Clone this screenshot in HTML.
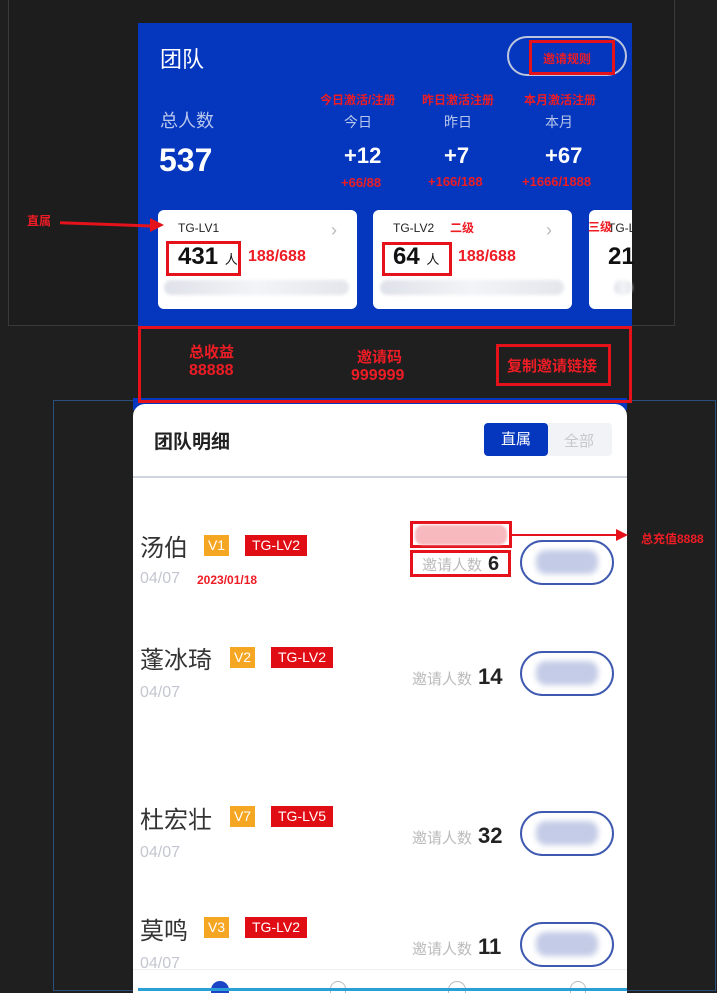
<!DOCTYPE html>
<html><head><meta charset="utf-8"><style>
*{margin:0;padding:0;box-sizing:border-box}
body{width:717px;height:993px;background:#1f1f1f;position:relative;overflow:hidden;font-family:"Liberation Sans","Noto Sans CJK SC",sans-serif}
.a{position:absolute;white-space:nowrap}
.r{color:#ee1c25;font-weight:bold}
.w{color:#fff}
.box{position:absolute;border:3px solid #e5121b}
.card{position:absolute;background:#fff;border-radius:6px}
.blur{position:absolute;background:linear-gradient(90deg,#dfe2ea,#f3f4f7,#e4e6ec);border-radius:10px;filter:blur(1.5px)}
.pill{position:absolute;left:520px;width:94px;height:45px;border:2.5px solid #3e59b0;border-radius:23px}
.pill i{position:absolute;left:14px;top:8px;width:62px;height:24px;background:#c3cbe6;border-radius:10px;filter:blur(3px)}
.nm{font-size:24px;color:#333;position:absolute;left:140px}
.v{position:absolute;background:#f5a623;color:#fff;font-size:14px;width:25px;text-align:center;height:21px;line-height:21px}
.tg{position:absolute;background:#e10d14;color:#fff;font-size:14px;width:62px;text-align:center;height:21px;line-height:21px}
.dt{position:absolute;left:140px;font-size:16px;color:#c4c6d0}
.inv{position:absolute;font-size:15px;color:#bbb}
.inv b{font-size:22px;color:#222;font-weight:bold;margin-left:6px}
</style></head><body>
<div class="a" style="left:8px;top:0;width:667px;height:326px;background:#1d1d1d;border:1px solid #3a3a3a;border-top:0"></div>
<div class="a" style="left:138px;top:23px;width:494px;height:303px;background:#0437bd"></div>
<div class="a w" style="left:160px;top:42px;font-size:22px">团队</div>
<div class="a" style="left:507px;top:36px;width:120px;height:40px;border:2px solid #bcc5de;border-radius:20px"></div>
<div class="box" style="left:529px;top:40px;width:86px;height:35px"></div>
<div class="a r" style="left:543px;top:50px;font-size:12px">邀请规则</div>
<div class="a r" style="left:320px;top:91px;font-size:12px">今日激活/注册</div>
<div class="a r" style="left:422px;top:91px;font-size:12px">昨日激活注册</div>
<div class="a r" style="left:524px;top:91px;font-size:12px">本月激活注册</div>
<div class="a" style="left:160px;top:107px;font-size:18px;color:#b8c6ec">总人数</div>
<div class="a" style="left:344px;top:112px;font-size:14px;color:#b8c6ec">今日</div>
<div class="a" style="left:444px;top:112px;font-size:14px;color:#b8c6ec">昨日</div>
<div class="a" style="left:545px;top:112px;font-size:14px;color:#b8c6ec">本月</div>
<div class="a w" style="left:159px;top:142px;font-size:32px;font-weight:bold">537</div>
<div class="a w" style="left:344px;top:143px;font-size:22px;font-weight:bold">+12</div>
<div class="a w" style="left:444px;top:143px;font-size:22px;font-weight:bold">+7</div>
<div class="a w" style="left:545px;top:143px;font-size:22px;font-weight:bold">+67</div>
<div class="a r" style="left:341px;top:175px;font-size:13px">+66/88</div>
<div class="a r" style="left:428px;top:174px;font-size:13px">+166/188</div>
<div class="a r" style="left:522px;top:174px;font-size:13px">+1666/1888</div>
<div class="card" style="left:158px;top:210px;width:199px;height:99px"></div>
<div class="card" style="left:373px;top:210px;width:199px;height:99px"></div>
<div class="card" style="left:589px;top:210px;width:43px;height:99px;border-radius:6px 0 0 6px"></div>
<div class="a" style="left:178px;top:221px;font-size:12px;color:#222">TG-LV1</div>
<div class="a" style="left:393px;top:221px;font-size:12px;color:#222">TG-LV2</div>
<div class="a" style="left:608px;top:221px;font-size:12px;color:#222">TG-L</div>
<div class="a" style="left:331px;top:220px;font-size:18px;color:#bbb">›</div>
<div class="a" style="left:546px;top:220px;font-size:18px;color:#bbb">›</div>
<div class="box" style="left:166px;top:241px;width:75px;height:35px"></div>
<div class="box" style="left:382px;top:242px;width:70px;height:34px"></div>
<div class="a" style="left:178px;top:243px;font-size:24px;color:#111;font-weight:bold">431 <span style="font-size:13px;font-weight:normal">人</span></div>
<div class="a" style="left:393px;top:243px;font-size:24px;color:#111;font-weight:bold">64 <span style="font-size:13px;font-weight:normal">人</span></div>
<div class="a" style="left:608px;top:243px;font-size:24px;color:#111;font-weight:bold">21</div>
<div class="a r" style="left:248px;top:248px;font-size:16px">188/688</div>
<div class="a r" style="left:458px;top:248px;font-size:16px">188/688</div>
<div class="blur" style="left:164px;top:280px;width:185px;height:15px"></div>
<div class="blur" style="left:380px;top:280px;width:184px;height:15px"></div>
<div class="blur" style="left:614px;top:280px;width:18px;height:15px"></div>
<div class="a r" style="left:588px;top:218px;font-size:12px">三级</div>
<div class="a r" style="left:450px;top:219px;font-size:12px">二级</div>
<div class="a r" style="left:27px;top:212px;font-size:12px">直属</div>
<div class="a" style="left:60px;top:223px;width:98px;height:3px;background:#e5121b;transform:rotate(2deg)"></div>
<div class="a" style="left:150px;top:218px;border-left:14px solid #e5121b;border-top:7px solid transparent;border-bottom:7px solid transparent"></div>
<div class="a" style="left:53px;top:400px;width:663px;height:591px;border:1px solid #2a4f7a"></div>
<div class="a" style="left:133px;top:398px;width:494px;height:12px;background:#0437bd"></div>
<div class="box" style="left:138px;top:326px;width:494px;height:77px"></div>
<div class="a r" style="left:189px;top:341px;font-size:15px">总收益</div>
<div class="a r" style="left:189px;top:362px;font-size:16px">88888</div>
<div class="a r" style="left:357px;top:346px;font-size:15px">邀请码</div>
<div class="a r" style="left:351px;top:367px;font-size:16px">999999</div>
<div class="box" style="left:496px;top:344px;width:115px;height:42px"></div>
<div class="a r" style="left:507px;top:355px;font-size:15px">复制邀请链接</div>
<div class="a" style="left:133px;top:404px;width:494px;height:589px;background:#fff;border-radius:12px 12px 0 0"></div>
<div class="a" style="left:154px;top:427px;font-size:19px;color:#222;font-weight:bold">团队明细</div>
<div class="a" style="left:484px;top:423px;width:128px;height:33px;background:#f2f3f6;border-radius:4px"></div>
<div class="a" style="left:484px;top:423px;width:64px;height:33px;background:#0437bd;border-radius:4px;color:#fff;font-size:15px;text-align:center;line-height:33px">直属</div>
<div class="a" style="left:564px;top:430px;font-size:15px;color:#c8c8c8">全部</div>
<div class="a" style="left:133px;top:476px;width:494px;height:2px;background:#cfd6de"></div>
<div class="nm" style="top:528px">汤伯</div>
<div class="v" style="left:204px;top:535px">V1</div>
<div class="tg" style="left:245px;top:535px">TG-LV2</div>
<div class="dt" style="top:570px">04/07</div>
<div class="a r" style="left:197px;top:573px;font-size:12px">2023/01/18</div>
<div class="box" style="left:410px;top:521px;width:102px;height:27px"></div>
<div class="a" style="left:415px;top:525px;width:92px;height:20px;background:#f7b9bd;border-radius:8px;filter:blur(1px)"></div>
<div class="box" style="left:410px;top:550px;width:101px;height:27px"></div>
<div class="inv" style="left:422px;top:553px">邀请人数<b style="font-size:20px">6</b></div>
<div class="a" style="left:512px;top:534px;width:104px;height:2px;background:#e5121b"></div>
<div class="a" style="left:616px;top:529px;border-left:12px solid #e5121b;border-top:6px solid transparent;border-bottom:6px solid transparent"></div>
<div class="a r" style="left:641px;top:530px;font-size:12px">总充值8888</div>
<div class="pill" style="top:540px"><i></i></div>
<div class="nm" style="top:640px">蓬冰琦</div>
<div class="v" style="left:230px;top:647px">V2</div>
<div class="tg" style="left:271px;top:647px">TG-LV2</div>
<div class="dt" style="top:684px">04/07</div>
<div class="inv" style="left:412px;top:664px">邀请人数<b>14</b></div>
<div class="pill" style="top:651px"><i></i></div>
<div class="nm" style="top:800px">杜宏壮</div>
<div class="v" style="left:230px;top:806px">V7</div>
<div class="tg" style="left:271px;top:806px">TG-LV5</div>
<div class="dt" style="top:844px">04/07</div>
<div class="inv" style="left:412px;top:823px">邀请人数<b>32</b></div>
<div class="pill" style="top:811px"><i></i></div>
<div class="nm" style="top:911px">莫鸣</div>
<div class="v" style="left:204px;top:917px">V3</div>
<div class="tg" style="left:245px;top:917px">TG-LV2</div>
<div class="dt" style="top:955px">04/07</div>
<div class="inv" style="left:412px;top:934px">邀请人数<b>11</b></div>
<div class="pill" style="top:922px"><i></i></div>
<div class="a" style="left:133px;top:969px;width:494px;height:24px;background:#fff;border-top:1px solid #eee"></div>
<div class="a" style="left:211px;top:981px;width:18px;height:12px;background:#1a46c6;border-radius:9px 9px 0 0"></div>
<div class="a" style="left:330px;top:981px;width:16px;height:12px;border:1.5px solid #bbb;border-bottom:0;border-radius:8px 8px 0 0"></div>
<div class="a" style="left:448px;top:981px;width:18px;height:12px;border:1.5px solid #bbb;border-bottom:0;border-radius:9px 9px 0 0"></div>
<div class="a" style="left:570px;top:981px;width:16px;height:12px;border:1.5px solid #bbb;border-bottom:0;border-radius:8px 8px 0 0"></div>
<div class="a" style="left:138px;top:988px;width:489px;height:3px;background:#2a9fd6"></div>
</body></html>
